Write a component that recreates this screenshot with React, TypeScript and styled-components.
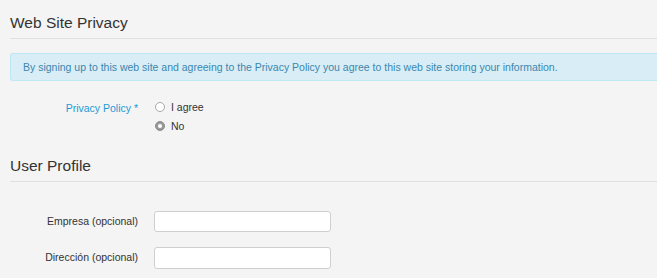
import React from "react";
import styled, { createGlobalStyle } from "styled-components";

const Global = createGlobalStyle`
  html, body { margin: 0; padding: 0; background: #f4f4f4; overflow: hidden; }
  body { font-family: "Liberation Sans", Arial, sans-serif; color: #333; }
`;

const Page = styled.div`
  padding: 0 0 0 10px;
`;

const Section = styled.section<{ $top?: number }>`
  display: flex;
  flex-direction: column;
  margin-top: ${(p) => p.$top ?? 0}px;
`;

const Heading = styled.h3`
  margin: 0;
  font-size: 15.5px;
  font-weight: normal;
  color: #333;
  line-height: 20px;
  padding: 13px 0 5px;
  border-bottom: 1px solid #e0e0e0;
`;

const Alert = styled.div`
  margin-top: 14px;
  height: 26px;
  display: flex;
  align-items: center;
  padding: 0 12px;
  background: #d9edf7;
  border: 1px solid #bce8f1;
  border-right: none;
  border-radius: 3px 0 0 3px;
  color: #3a87ad;
  font-size: 10.5px;
  white-space: nowrap;
`;

const FormRow = styled.div<{ $top: number }>`
  display: grid;
  grid-template-columns: 128px 1fr;
  column-gap: 16px;
  margin-top: ${(p) => p.$top}px;
  align-items: start;
`;

const Label = styled.label<{ $link?: boolean }>`
  text-align: right;
  font-size: 10.5px;
  line-height: 20px;
  color: ${(p) => (p.$link ? "#1c9bd6" : "#333")};
`;

const RadioList = styled.div`
  display: flex;
  flex-direction: column;
`;

const RadioOption = styled.div`
  display: flex;
  align-items: center;
  height: 18.5px;
  font-size: 10.5px;
  color: #333;
  gap: 6px;
`;

const Radio = styled.span<{ $checked?: boolean }>`
  box-sizing: border-box;
  width: 10px;
  height: 10px;
  border-radius: 50%;
  margin-left: 1px;
  border: 1px solid ${(p) => (p.$checked ? "#8a8a8a" : "#a8a8a8")};
  background: ${(p) => (p.$checked ? "#9a9a9a" : "#fff")};
  display: flex;
  align-items: center;
  justify-content: center;
  &::after {
    content: "";
    display: ${(p) => (p.$checked ? "block" : "none")};
    width: 4px;
    height: 4px;
    border-radius: 50%;
    background: #fff;
  }
`;

const Input = styled.input<{ $h: number }>`
  box-sizing: border-box;
  width: 177px;
  height: ${(p) => p.$h}px;
  border: 1px solid #cfcfcf;
  border-radius: 3px;
  background: #fff;
  margin: 0;
  padding: 0 6px;
  font-family: inherit;
  font-size: 11px;
  outline: none;
`;

export default function App() {
  return (
    <>
      <Global />
      <Page>
        <Section>
          <Heading>Web Site Privacy</Heading>
          <Alert>
            By signing up to this web site and agreeing to the Privacy Policy you agree to this web site storing your information.
          </Alert>
          <FormRow $top={17}>
            <Label $link>Privacy Policy *</Label>
            <RadioList>
              <RadioOption>
                <Radio />
                <span>I agree</span>
              </RadioOption>
              <RadioOption>
                <Radio $checked />
                <span>No</span>
              </RadioOption>
            </RadioList>
          </FormRow>
        </Section>
        <Section $top={8}>
          <Heading>User Profile</Heading>
          <FormRow $top={29}>
            <Label>Empresa (opcional)</Label>
            <Input type="text" $h={21} />
          </FormRow>
          <FormRow $top={15}>
            <Label>Dirección (opcional)</Label>
            <Input type="text" $h={22} />
          </FormRow>
        </Section>
      </Page>
    </>
  );
}
